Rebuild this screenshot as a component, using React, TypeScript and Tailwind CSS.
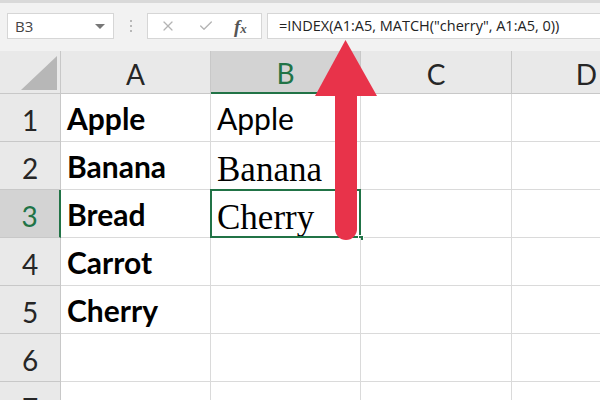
import { X, Check } from "lucide-react";

const rows = [
  { n: 1, a: "Apple", b: "Apple", bSerif: false },
  { n: 2, a: "Banana", b: "Banana", bSerif: true },
  { n: 3, a: "Bread", b: "Cherry", bSerif: true },
  { n: 4, a: "Carrot", b: "", bSerif: false },
  { n: 5, a: "Cherry", b: "", bSerif: false },
  { n: 6, a: "", b: "", bSerif: false },
  { n: 7, a: "", b: "", bSerif: false },
];

const calibri = { fontFamily: "Lato, 'Open Sans', sans-serif" };

function Toolbar() {
  return (
    <div className="flex h-[51px] items-start border-t-[3px] border-[#d9d9d9] bg-[#f2f2f2] pt-[10px]">
      {/* Name box */}
      <div className="ml-[7px] flex h-[26px] w-[107px] items-center justify-between border border-[#d6d6d6] bg-white pl-[7px] pr-[8px]">
        <span className="text-[15px] text-[#444]" style={{ fontFamily: "'Open Sans', sans-serif" }}>
          B3
        </span>
        <span className="h-0 w-0 border-x-[5px] border-t-[5px] border-x-transparent border-t-[#777]" />
      </div>
      {/* Dots */}
      <div className="ml-[16px] mt-[7px] flex flex-col gap-[3px]">
        <span className="h-[2px] w-[2px] bg-[#b8b8b8]" />
        <span className="h-[2px] w-[2px] bg-[#b8b8b8]" />
        <span className="h-[2px] w-[2px] bg-[#b8b8b8]" />
      </div>
      {/* Cancel / enter / fx */}
      <div className="ml-[15px] flex h-[26px] w-[115px] items-center border border-[#d6d6d6] bg-white">
        <X className="ml-[12px] h-[16px] w-[16px] text-[#b4b4b4]" strokeWidth={1.8} />
        <Check className="ml-[22px] h-[16px] w-[16px] text-[#b4b4b4]" strokeWidth={2} />
        <span
          className="ml-[20px] text-[19px] font-bold italic leading-none text-[#555]"
          style={{ fontFamily: "'Liberation Serif', serif" }}
        >
          f<span className="text-[13px]">x</span>
        </span>
      </div>
      {/* Formula box */}
      <div className="ml-[5px] flex h-[26px] flex-1 items-center border border-r-0 border-[#d6d6d6] bg-white pl-[11px]">
        <span className="whitespace-nowrap text-[14.5px] text-[#222]" style={{ fontFamily: "'Open Sans', sans-serif" }}>
          =INDEX(A1:A5, MATCH("cherry", A1:A5, 0))
        </span>
      </div>
    </div>
  );
}

function Grid() {
  return (
    <div className="grid grid-cols-[61px_150px_150px_151px_150px]" style={calibri}>
      {/* Header row */}
      <div className="relative h-[43px] border-b border-r border-[#c8c8c8] bg-[#e9e9e9]">
        <span className="absolute bottom-[3px] right-[3px] h-0 w-0 border-b-[34px] border-l-[36px] border-b-[#b7b7b7] border-l-transparent" />
      </div>
      <div className="flex h-[43px] items-center justify-center border-b border-r border-[#c8c8c8] bg-[#e9e9e9] pt-[3px] text-[28px] text-[#262626]">
        A
      </div>
      <div className="flex h-[43px] items-center justify-center border-b-2 border-r border-b-[#217346] border-r-[#c8c8c8] bg-[#d3d3d3] pt-[3px] text-[28px] text-[#217346]">
        B
      </div>
      <div className="flex h-[43px] items-center justify-center border-b border-r border-[#c8c8c8] bg-[#e9e9e9] pt-[3px] text-[28px] text-[#262626]">
        C
      </div>
      <div className="flex h-[43px] items-center justify-center border-b border-r border-[#c8c8c8] bg-[#e9e9e9] pt-[3px] text-[28px] text-[#262626]">
        D
      </div>

      {rows.map((r) => {
        const sel = r.n === 3;
        return (
          <div key={r.n} className="contents">
            <div
              className={
                sel
                  ? "flex h-[48px] items-center justify-center border-b border-r-2 border-b-[#c8c8c8] border-r-[#217346] bg-[#d3d3d3] pt-[4px] text-[28px] text-[#217346]"
                  : "flex h-[48px] items-center justify-center border-b border-r border-[#c8c8c8] bg-[#e9e9e9] pt-[4px] text-[28px] text-[#262626]"
              }
            >
              {r.n}
            </div>
            <div className="flex h-[48px] items-end border-b border-r border-[#dadada] bg-white pb-[2px] pl-[6px] text-[30px] font-bold leading-[42px] text-black">
              {r.a}
            </div>
            <div className="relative flex h-[48px] items-end border-b border-r border-[#dadada] bg-white pl-[6px]">
              {r.b && (
                <span
                  className={
                    r.bSerif
                      ? "pb-[2px] text-[35px] leading-none text-black"
                      : "pb-[2px] text-[30px] leading-[42px] text-black"
                  }
                  style={r.bSerif ? { fontFamily: "'Liberation Serif', serif" } : undefined}
                >
                  {r.b}
                </span>
              )}
              {sel && (
                <>
                  <div className="absolute -left-px -top-px bottom-[-1px] right-[-1px] border-2 border-[#217346]" />
                  <div className="absolute bottom-[-4px] right-[-4px] h-[6px] w-[6px] border border-white bg-[#217346]" />
                </>
              )}
            </div>
            <div className="h-[48px] border-b border-r border-[#dadada] bg-white" />
            <div className="h-[48px] border-b border-r border-[#dadada] bg-white" />
          </div>
        );
      })}
    </div>
  );
}

export default function App() {
  return (
    <div className="relative h-[400px] w-[600px] overflow-hidden bg-white">
      <Toolbar />
      <Grid />
      {/* Red arrow overlay */}
      <svg className="pointer-events-none absolute inset-0" width="600" height="400" viewBox="0 0 600 400">
        <path d="M335 95 H357 V229 A11 11 0 0 1 335 229 Z" fill="#e8334a" />
        <polygon points="345.5,40 315,96 377,96" fill="#e8334a" />
      </svg>
    </div>
  );
}
